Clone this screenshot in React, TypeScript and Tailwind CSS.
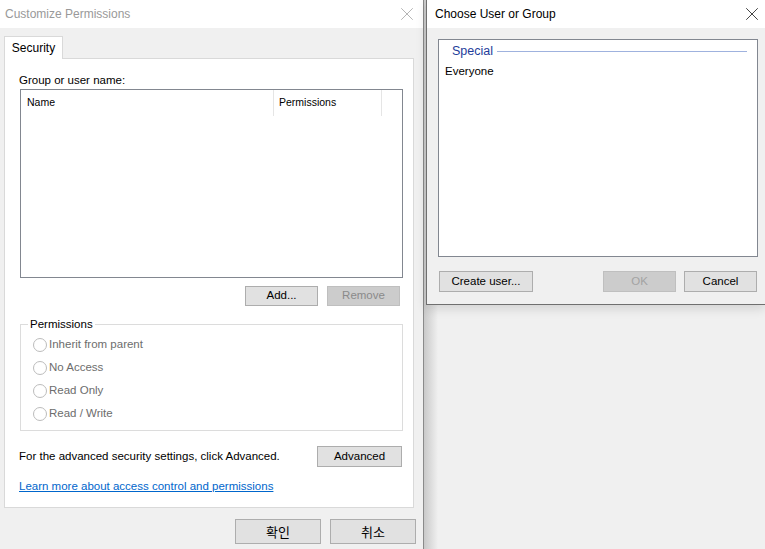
import { X } from 'lucide-react';

const permissionOptions = ['Inherit from parent', 'No Access', 'Read Only', 'Read / Write'];

function WinButton({
  children,
  disabled = false,
  className = '',
}: {
  children: React.ReactNode;
  disabled?: boolean;
  className?: string;
}) {
  return (
    <button
      disabled={disabled}
      className={`flex items-center justify-center border text-[11.5px] leading-none ${
        disabled
          ? 'bg-[#cccccc] border-[#bfbfbf] text-[#8a8a8a]'
          : 'bg-[#e1e1e1] border-[#adadad] text-black'
      } ${className}`}
    >
      {children}
    </button>
  );
}

function Radio({ label }: { label: string }) {
  return (
    <div className="flex items-center h-[23px]">
      <span className="w-[14px] h-[14px] rounded-full border border-[#bcbcbc] bg-white" />
      <span className="ml-[2px] text-[11.5px] text-[#6d6d6d]">{label}</span>
    </div>
  );
}

function CustomizePermissions() {
  return (
    <div className="absolute left-0 top-0 w-[424px] h-[549px] bg-[#f0f0f0] border-r border-[#8a8a8a] flex flex-col">
      {/* Title bar */}
      <div className="h-[28px] bg-white flex items-center justify-between pl-[5px] pr-[5px] shrink-0">
        <span className="text-[12px] text-[#999999]">Customize Permissions</span>
        <X className="w-[22px] h-[22px] text-[#9a9a9a]" strokeWidth={0.8} />
      </div>

      <div className="px-[4px] pt-[7px]">
        {/* Tab */}
        <div className="flex">
          <div className="w-[59px] h-[23px] bg-white border border-b-0 border-[#d9d9d9] flex items-center justify-center text-[12px] text-black relative top-[1px]">
            Security
          </div>
        </div>

        {/* Tab panel */}
        <div className="w-[410px] h-[450px] bg-white border border-[#d9d9d9] pl-[14px] pt-[14px] flex flex-col">
          <div className="text-[11.5px] text-black leading-[14px]">Group or user name:</div>
          <div className="mt-[2px] ml-px w-[383px] h-[189px] border border-[#828790] bg-white">
            <div className="flex h-[26px] items-center text-[10.5px] text-black">
              <div className="w-[253px] pl-[6px] h-full flex items-center border-r border-[#e5e5e5]">Name</div>
              <div className="w-[108px] pl-[5px] h-full flex items-center border-r border-[#e5e5e5]">Permissions</div>
            </div>
          </div>

          <div className="flex justify-end gap-[9px] w-[381px] mt-[8px]">
            <WinButton className="w-[73px] h-[20px]">Add...</WinButton>
            <WinButton disabled className="w-[73px] h-[20px]">Remove</WinButton>
          </div>

          {/* Permissions group box */}
          <fieldset className="mt-[11px] ml-px w-[383px] h-[114px] border border-[#dcdcdc] px-[12px] pt-[2px]">
            <legend className="ml-[-5px] px-[2px] text-[11.5px] text-black leading-[14px]">Permissions</legend>
            <div className="flex flex-col">
              {permissionOptions.map((option) => (
                <Radio key={option} label={option} />
              ))}
            </div>
          </fieldset>

          <div className="flex items-center justify-between w-[383px] mt-[15px]">
            <span className="text-[11.5px] text-black">For the advanced security settings, click Advanced.</span>
            <WinButton className="w-[85px] h-[21px]">Advanced</WinButton>
          </div>

          <a href="#" className="mt-[11px] text-[11.5px] text-[#0066cc] underline w-fit">
            Learn more about access control and permissions
          </a>
        </div>

        {/* Dialog buttons */}
        <div className="flex justify-end gap-[9px] w-[412px] mt-[11px]">
          <WinButton className="w-[86px] h-[25px] !text-[13px]">
            <span style={{ fontFamily: '"Noto Sans CJK KR", sans-serif' }}>확인</span>
          </WinButton>
          <WinButton className="w-[86px] h-[25px] !text-[13px]">
            <span style={{ fontFamily: '"Noto Sans CJK KR", sans-serif' }}>취소</span>
          </WinButton>
        </div>
      </div>
    </div>
  );
}

function ChooseUserOrGroup() {
  return (
    <div className="absolute left-[426px] top-0 w-[339px] h-[305px] bg-[#f0f0f0] border-l border-b border-[#6f6f6f] shadow-[0_4px_10px_rgba(0,0,0,0.12)] flex flex-col">
      <div className="h-[28px] bg-white flex items-center justify-between pl-[8px] pr-[2px] shrink-0">
        <span className="text-[12px] text-black">Choose User or Group</span>
        <X className="w-[22px] h-[22px] text-black" strokeWidth={0.8} />
      </div>

      <div className="pl-[11px] pt-[11px]">
        <div className="w-[320px] h-[218px] bg-white border border-[#828790] px-[6px] pt-[3px]">
          <div className="flex items-center h-[16px] pl-[7px]">
            <span className="text-[12.5px] text-[#1e3d9a]">Special</span>
            <span className="ml-[4px] flex-1 h-px bg-[#9fb2de] mr-[4px]" />
          </div>
          <div className="mt-[4px] text-[11.5px] text-black">Everyone</div>
        </div>

        <div className="flex items-center w-[318px] ml-px mt-[14px]">
          <WinButton className="w-[94px] h-[21px]">Create user...</WinButton>
          <div className="flex-1" />
          <WinButton disabled className="w-[73px] h-[21px] !text-[#a3a3a3]">OK</WinButton>
          <WinButton className="w-[73px] h-[21px] ml-[8px]">Cancel</WinButton>
        </div>
      </div>
    </div>
  );
}

export default function App() {
  return (
    <div
      className="relative w-[765px] h-[549px] bg-[#f0f0f0] overflow-hidden"
      style={{ fontFamily: '"Liberation Sans", "Noto Sans CJK KR", sans-serif' }}
    >
      <CustomizePermissions />
      {/* shadow cast by the left window */}
      <div className="absolute left-[424px] top-0 w-[14px] h-[549px] bg-gradient-to-r from-[#c9c9c9] to-[#f0f0f0]" />
      <ChooseUserOrGroup />
    </div>
  );
}
